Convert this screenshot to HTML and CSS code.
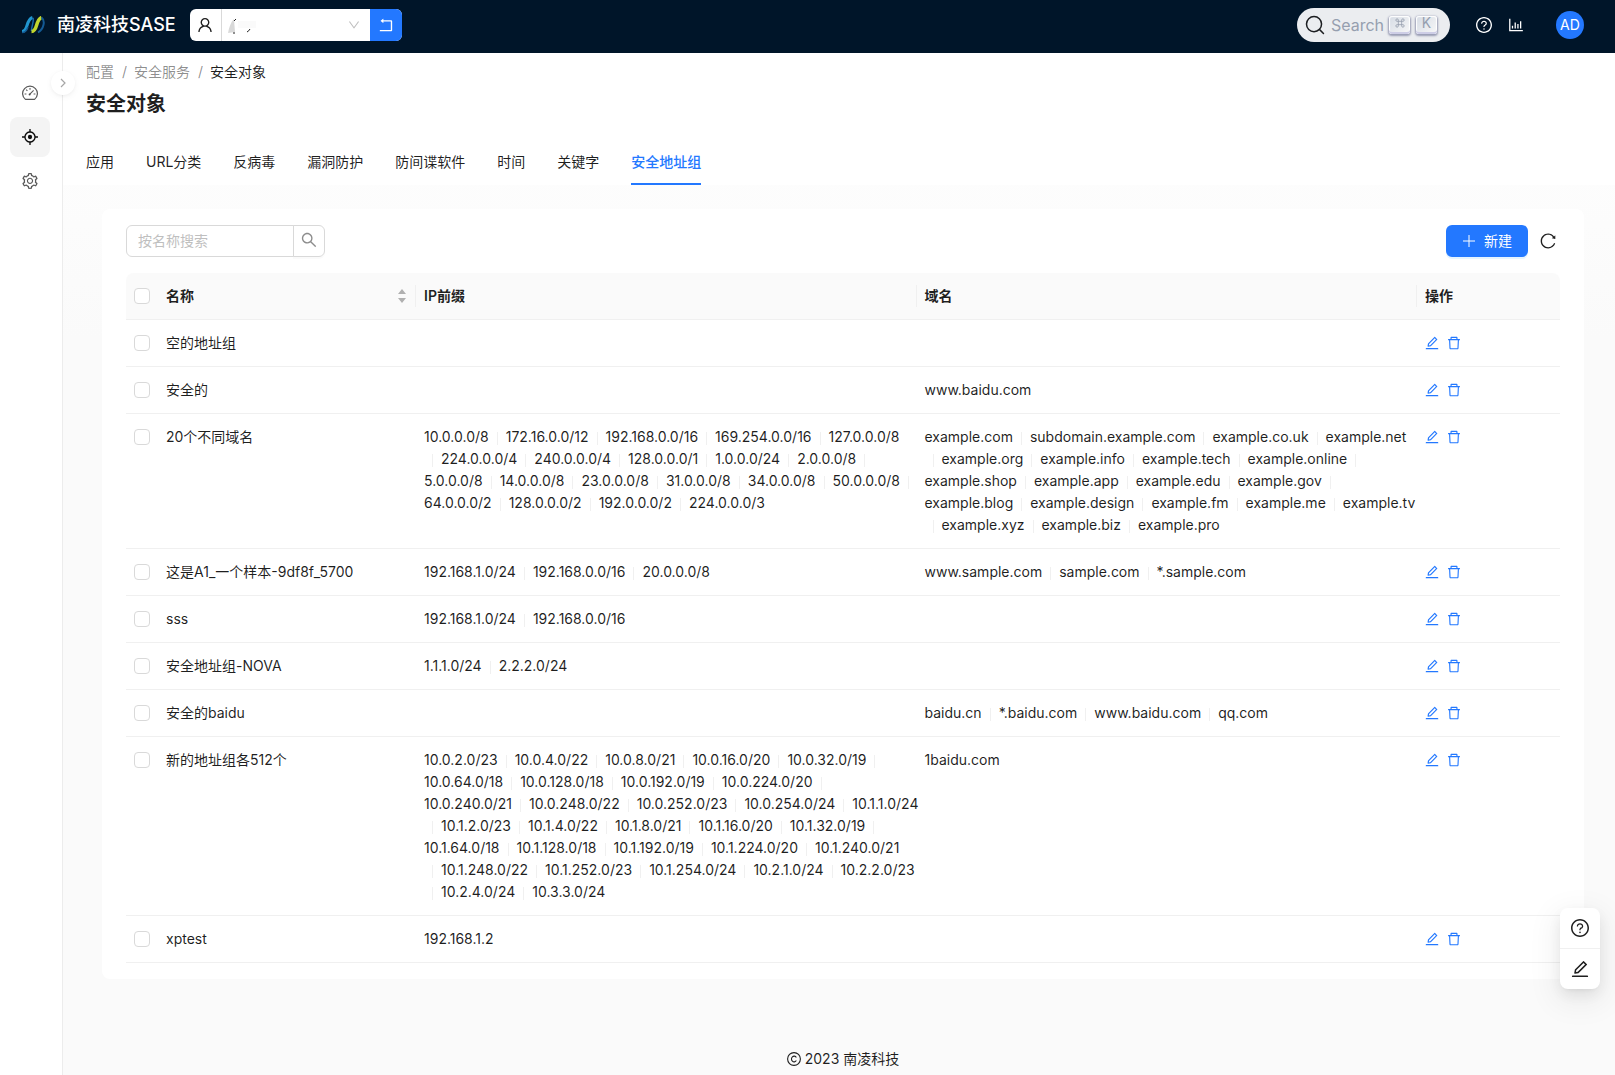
FILE: index.html
```html
<!DOCTYPE html>
<html lang="zh-CN">
<head>
<meta charset="utf-8">
<meta name="viewport" content="width=device-width, initial-scale=1">
<title>安全对象 - 南凌科技SASE</title>
<link rel="stylesheet" href="styles.css">
</head>
<body>
<svg class="sprite" aria-hidden="true">
  <symbol id="i-edit" viewBox="64 64 896 896"><path d="M257.7 752c2 0 4-.2 6-.5L431.9 722c2-.4 3.9-1.3 5.3-2.8l423.9-423.9a9.96 9.96 0 000-14.1L694.9 114.9c-1.9-1.9-4.4-2.9-7.1-2.9s-5.2 1-7.1 2.9L256.8 538.8c-1.5 1.5-2.4 3.3-2.8 5.3l-29.5 168.2a33.5 33.5 0 009.4 29.8c6.6 6.4 14.9 9.9 23.8 9.9zm67.4-174.4L687.8 215l73.3 73.3-362.7 362.6-88.9 15.7 15.6-89zM880 836H144c-17.7 0-32 14.3-32 32v36c0 4.4 3.6 8 8 8h784c4.4 0 8-3.6 8-8v-36c0-17.7-14.3-32-32-32z"/></symbol>
  <symbol id="i-delete" viewBox="64 64 896 896"><path d="M360 184h-8c4.4 0 8-3.6 8-8v8h304v-8c0 4.4 3.6 8 8 8h-8v72h72v-80c0-35.3-28.7-64-64-64H352c-35.3 0-64 28.7-64 64v80h72v-72zm504 72H160c-17.7 0-32 14.3-32 32v32c0 4.4 3.6 8 8 8h60.4l24.7 523c1.6 34.1 29.8 61 63.9 61h454c34.2 0 62.3-26.8 63.9-61l24.7-523H888c4.4 0 8-3.6 8-8v-32c0-17.7-14.3-32-32-32zM731.3 840H292.7l-24.2-512h487l-24.2 512z"/></symbol>
  <symbol id="i-search" viewBox="64 64 896 896"><path d="M909.6 854.5L649.9 594.8C690.2 542.7 712 479 712 412c0-80.2-31.3-155.4-87.9-212.1-56.6-56.7-132-87.9-212.1-87.9s-155.5 31.3-212.1 87.9C143.2 256.5 112 331.8 112 412c0 80.1 31.3 155.5 87.9 212.1C256.5 680.8 331.8 712 412 712c67 0 130.6-21.8 182.7-62l259.7 259.6a8.2 8.2 0 0011.6 0l43.6-43.5a8.2 8.2 0 000-11.6zM570.4 570.4C528 612.7 471.8 636 412 636s-116-23.3-158.4-65.6C211.3 528 188 471.8 188 412s23.3-116.1 65.6-158.4C296 211.3 352.2 188 412 188s116.1 23.2 158.4 65.6S636 352.2 636 412s-23.3 116.1-65.6 158.4z"/></symbol>
  <symbol id="i-reload" viewBox="64 64 896 896"><path d="M909.1 209.3l-56.4 44.1C775.8 155.1 656.2 92 521.9 92 290 92 102.3 279.5 102 511.5 101.7 743.7 289.8 932 521.9 932c181.3 0 335.8-115 394.6-276.1 1.5-4.2-.7-8.9-4.9-10.3l-56.7-19.5a8 8 0 00-10.1 4.8c-1.8 5-3.8 10-5.9 14.9-17.3 41-42.1 77.8-73.7 109.4A344.77 344.77 0 01655.9 829c-42.3 17.9-87.4 27-133.8 27-46.5 0-91.5-9.1-133.8-27A341.5 341.5 0 01279 755.2a342.16 342.16 0 01-73.7-109.4c-17.9-42.4-27-87.4-27-133.9s9.1-91.5 27-133.9c17.3-41 42.1-77.8 73.7-109.4 31.6-31.6 68.4-56.4 109.3-73.8 42.3-17.9 87.4-27 133.8-27 46.5 0 91.5 9.1 133.8 27a341.5 341.5 0 01109.3 73.8c9.9 9.9 19.2 20.4 27.8 31.4l-60.2 47a8 8 0 003 14.1l175.6 43c5 1.2 9.9-2.6 9.9-7.7l.8-180.9c-.1-6.6-7.8-10.3-13-6.2z"/></symbol>
  <symbol id="i-help" viewBox="64 64 896 896"><path d="M512 64C264.6 64 64 264.6 64 512s200.6 448 448 448 448-200.6 448-448S759.4 64 512 64zm0 820c-205.4 0-372-166.6-372-372s166.6-372 372-372 372 166.6 372 372-166.6 372-372 372z"/><path d="M623.6 316.7C593.6 290.4 554 276 512 276s-81.6 14.5-111.6 40.7C369.2 344 352 380.7 352 420v7.6c0 4.4 3.6 8 8 8h48c4.4 0 8-3.6 8-8V420c0-44.1 43.1-80 96-80s96 35.9 96 80c0 31.1-22 59.6-56.1 72.7-21.2 8.1-39.2 22.3-52.1 40.9-13.1 19-19.9 41.8-19.9 64.9V620c0 4.4 3.6 8 8 8h48c4.4 0 8-3.6 8-8v-22.7a48.3 48.3 0 0130.9-44.8c59-22.7 97.1-74.7 97.1-132.5.1-39.3-17.1-76-48.3-103.3zM472 732a40 40 0 1080 0 40 40 0 10-80 0z"/></symbol>
  <symbol id="i-chart" viewBox="64 64 896 896"><path d="M888 792H200V168c0-4.4-3.6-8-8-8h-56c-4.4 0-8 3.6-8 8v688c0 4.4 3.6 8 8 8h752c4.4 0 8-3.6 8-8v-56c0-4.4-3.6-8-8-8zm-600-80h56c4.4 0 8-3.6 8-8V560c0-4.4-3.6-8-8-8h-56c-4.4 0-8 3.6-8 8v144c0 4.4 3.6 8 8 8zm152 0h56c4.4 0 8-3.6 8-8V384c0-4.4-3.6-8-8-8h-56c-4.4 0-8 3.6-8 8v320c0 4.4 3.6 8 8 8zm152 0h56c4.4 0 8-3.6 8-8V462c0-4.4-3.6-8-8-8h-56c-4.4 0-8 3.6-8 8v242c0 4.4 3.6 8 8 8zm152 0h56c4.4 0 8-3.6 8-8V304c0-4.4-3.6-8-8-8h-56c-4.4 0-8 3.6-8 8v400c0 4.4 3.6 8 8 8z"/></symbol>
  <symbol id="i-user" viewBox="64 64 896 896"><path d="M858.5 763.6a374 374 0 00-80.6-119.5 375.63 375.63 0 00-119.5-80.6c-.4-.2-.8-.3-1.2-.5C719.5 518 760 444.7 760 362c0-137-111-248-248-248S264 225 264 362c0 82.7 40.5 156 102.8 201.1-.4.2-.8.3-1.2.5-44.8 18.9-85 46-119.5 80.6a375.63 375.63 0 00-80.6 119.5A371.7 371.7 0 00136 901.8a8 8 0 008 8.2h60c4.4 0 7.9-3.5 8-7.8 2-77.2 33-149.5 87.8-204.3 56.7-56.7 132-87.9 212.2-87.9s155.5 31.2 212.2 87.9C779 752.7 810 825 812 902.2c.1 4.4 3.6 7.8 8 7.8h60a8 8 0 008-8.2c-1-47.8-10.9-94.3-29.5-138.2zM512 534c-45.9 0-89.1-17.9-121.6-50.4S340 407.9 340 362c0-45.9 17.9-89.1 50.4-121.6S466.1 190 512 190s89.1 17.9 121.6 50.4S684 316.1 684 362c0 45.9-17.9 89.1-50.4 121.6S557.9 534 512 534z"/></symbol>
  <symbol id="i-down" viewBox="64 64 896 896"><path d="M884 256h-75c-5.1 0-9.9 2.5-12.9 6.6L512 654.2 227.9 262.6c-3-4.1-7.8-6.6-12.9-6.6h-75c-6.5 0-10.3 7.4-6.5 12.7l352.6 486.1c12.8 17.6 39 17.6 51.7 0l352.6-486.1c3.9-5.3.1-12.7-6.4-12.7z"/></symbol>
  <symbol id="i-rollback" viewBox="64 64 896 896"><path d="M793 242H366v-74c0-6.7-7.7-10.4-12.9-6.3l-142 112a8 8 0 000 12.6l142 112c5.2 4.1 12.9.4 12.9-6.3v-74h415v470H175c-4.4 0-8 3.6-8 8v60c0 4.4 3.6 8 8 8h618c35.3 0 64-28.7 64-64V306c0-35.3-28.7-64-64-64z"/></symbol>
  <symbol id="i-aim" viewBox="64 64 896 896"><path d="M952 474H829.8C812.5 327.6 696.4 211.5 550 194.2V72c0-4.4-3.6-8-8-8h-60c-4.4 0-8 3.6-8 8v122.2C327.6 211.5 211.5 327.6 194.2 474H72c-4.4 0-8 3.6-8 8v60c0 4.4 3.6 8 8 8h122.2C211.5 696.4 327.6 812.5 474 829.8V952c0 4.4 3.6 8 8 8h60c4.4 0 8-3.6 8-8V829.8C696.4 812.5 812.5 696.4 829.8 550H952c4.4 0 8-3.6 8-8v-60c0-4.4-3.6-8-8-8zM512 756c-134.8 0-244-109.2-244-244s109.2-244 244-244 244 109.2 244 244-109.2 244-244 244z"/><circle cx="512" cy="512" r="120"/></symbol>
  <symbol id="i-dashboard" viewBox="0 0 16 16"><path d="M3.4 14.400A7.400 7.400 0 1 1 12.600 14.400Z" fill="none" stroke="currentColor" stroke-width="1.200" stroke-linejoin="round"/><path d="M8 3v1.800M4.200 4.700l1.200 1.200M2.600 9h1.800M11.600 9h1.800M7.600 9.400l4-4" fill="none" stroke="currentColor" stroke-width="1.100"/><circle cx="7.600" cy="9.500" r="1"/></symbol>
  <symbol id="i-setting" viewBox="64 64 896 896"><path d="M924.8 625.7l-65.5-56c3.1-19 4.7-38.4 4.7-57.8s-1.6-38.8-4.7-57.8l65.5-56a32.03 32.03 0 009.3-35.2l-.9-2.6a443.74 443.74 0 00-79.7-137.9l-1.8-2.1a32.12 32.12 0 00-35.1-9.5l-81.3 28.9c-30-24.6-63.5-44-99.7-57.6l-15.7-85a32.05 32.05 0 00-25.8-25.7l-2.7-.5c-52.1-9.4-106.9-9.4-159 0l-2.7.5a32.05 32.05 0 00-25.8 25.7l-15.8 85.4a351.86 351.86 0 00-99 57.4l-81.9-29.1a32 32 0 00-35.1 9.5l-1.8 2.1a446.02 446.02 0 00-79.7 137.9l-.9 2.6c-4.5 12.5-.8 26.5 9.3 35.2l66.3 56.6c-3.1 18.8-4.6 38-4.6 57.1 0 19.2 1.5 38.4 4.6 57.1L99 625.5a32.03 32.03 0 00-9.3 35.2l.9 2.6c18.1 50.4 44.9 96.9 79.7 137.9l1.8 2.1a32.12 32.12 0 0035.1 9.5l81.9-29.1c29.8 24.5 63.1 43.9 99 57.4l15.8 85.4a32.05 32.05 0 0025.8 25.7l2.7.5a449.4 449.4 0 00159 0l2.7-.5a32.05 32.05 0 0025.8-25.7l15.7-85a350 350 0 0099.7-57.6l81.3 28.9a32 32 0 0035.1-9.5l1.8-2.1c34.8-41.1 61.6-87.5 79.7-137.9l.9-2.6c4.5-12.3.8-26.3-9.3-35zM788.3 465.9c2.5 15.1 3.8 30.6 3.8 46.1s-1.3 31-3.8 46.1l-6.6 40.1 74.7 63.9a370.03 370.03 0 01-42.6 73.6L721 702.8l-31.4 25.8c-23.9 19.6-50.5 35-79.3 45.8l-38.1 14.3-17.9 97a377.5 377.5 0 01-85 0l-17.9-97.2-37.8-14.5c-28.5-10.8-55-26.2-78.7-45.7l-31.4-25.9-93.4 33.2c-17-22.9-31.2-47.6-42.6-73.6l75.5-64.5-6.5-40c-2.4-14.9-3.7-30.3-3.7-45.5 0-15.3 1.2-30.6 3.7-45.5l6.5-40-75.5-64.5c11.3-26.1 25.6-50.7 42.6-73.6l93.4 33.2 31.4-25.9c23.7-19.5 50.2-34.9 78.7-45.7l37.9-14.3 17.9-97.2c28.1-3.2 56.8-3.2 85 0l17.9 97 38.1 14.3c28.7 10.8 55.4 26.2 79.3 45.8l31.4 25.8 92.8-32.9c17 22.9 31.2 47.6 42.6 73.6L781.8 426l6.5 39.9zM512 326c-97.2 0-176 78.8-176 176s78.8 176 176 176 176-78.8 176-176-78.8-176-176-176zm79.2 255.2A111.6 111.6 0 01512 614c-29.9 0-58-11.7-79.2-32.8A111.6 111.6 0 01400 502c0-29.9 11.7-58 32.8-79.2C454 401.6 482.1 390 512 390c29.9 0 58 11.6 79.2 32.8A111.6 111.6 0 01624 502c0 29.9-11.7 58-32.8 79.2z"/></symbol>
</svg>

<header class="topbar">
  <a class="brand" href="#">
    <svg class="logo" viewBox="0 0 24 18" aria-hidden="true">
      <path d="M1 15.500C3.500 15.500 5 13 6 9.500S8.500 2.500 11.500 1.500" fill="none" stroke="#2196cf" stroke-width="3"/>
      <path d="M1 16.500C4 16.500 6 14 7 11" fill="none" stroke="#135a94" stroke-width="1.500"/>
      <path d="M12 2C13.500 4 10 12 10.500 15" fill="none" stroke="#1769a8" stroke-width="1.500"/>
      <path d="M10.500 15.500C13 15.500 14.500 13 15.500 9.500S18 2.500 20.500 1.500" fill="none" stroke="#c2d62e" stroke-width="3.500"/>
      <path d="M20.500 1.500C24.500 4.500 23 13 17 16.500" fill="none" stroke="#135a94" stroke-width="2"/>
    </svg>
    <span>南凌科技SASE</span>
  </a>
  <div class="tenant">
    <button class="tenant-user" type="button" aria-label="用户"><svg class="icon icon-16"><use href="#i-user"/></svg></button>
    <div class="tenant-pick">
      <select aria-label="租户"><option></option></select>
      <svg class="tenant-mask" viewBox="0 0 40 18" aria-hidden="true"><path d="M0 16C1 10 3 5 6 2L7 15Z" fill="#d9d9d9"/><path d="M6 4l2-2M5 16h2M19 15q2-1 3-3" stroke="#222" fill="none"/><path d="M10 4h18v7H10z" fill="#fafafa"/></svg>
      <svg class="icon icon-12 tenant-arrow"><use href="#i-down"/></svg>
    </div>
    <button class="tenant-back" type="button" aria-label="返回"><svg class="icon icon-16"><use href="#i-rollback"/></svg></button>
  </div>
  <div class="top-actions">
    <button class="doc-search" type="button">
      <svg class="icon-20" viewBox="0 0 20 20" aria-hidden="true"><path d="M14.386 14.386l4.088 4.088-4.088-4.088A7.533 7.533 0 1 1 3.733 3.733a7.533 7.533 0 0 1 10.653 10.653z" fill="none" stroke="#1c1e21" stroke-width="1.500" stroke-linecap="round" stroke-linejoin="round"/></svg>
      <span class="doc-label">Search</span>
      <kbd><svg viewBox="0 0 12 12" aria-hidden="true"><path d="M4 4V2.500A1.500 1.500 0 1 0 2.500 4h7A1.500 1.500 0 1 0 8 2.500v7A1.500 1.500 0 1 0 9.500 8h-7A1.500 1.500 0 1 0 4 9.500Z" fill="none" stroke="currentColor"/></svg></kbd>
      <kbd>K</kbd>
    </button>
    <button class="top-icon" type="button" aria-label="帮助"><svg class="icon icon-16"><use href="#i-help"/></svg></button>
    <button class="top-icon" type="button" aria-label="统计"><svg class="icon icon-16"><use href="#i-chart"/></svg></button>
    <button class="avatar" type="button">AD</button>
  </div>
</header>

<div class="layout">
  <nav class="sider" aria-label="主菜单">
    <a href="#" aria-label="仪表盘"><svg class="icon icon-16"><use href="#i-dashboard"/></svg></a>
    <a class="active" href="#" aria-label="配置"><svg class="icon icon-16"><use href="#i-aim"/></svg></a>
    <a href="#" aria-label="设置"><svg class="icon icon-16"><use href="#i-setting"/></svg></a>
    <button class="collapse" type="button" aria-label="展开菜单"><svg viewBox="0 0 12 12" aria-hidden="true"><path d="M4 2l4 4-4 4" fill="none" stroke="currentColor" stroke-width="1.200"/></svg></button>
  </nav>

  <div class="page">
    <div class="page-head">
      <nav class="crumbs" aria-label="面包屑"><a href="#">配置</a><span>/</span><a href="#">安全服务</a><span>/</span><b>安全对象</b></nav>
      <h1>安全对象</h1>
      <nav class="tabs" aria-label="对象类型">
        <a href="#">应用</a><a href="#">URL分类</a><a href="#">反病毒</a><a href="#">漏洞防护</a><a href="#">防间谍软件</a><a href="#">时间</a><a href="#">关键字</a><a class="current" href="#">安全地址组</a>
      </nav>
    </div>

    <main class="card">
      <div class="toolbar">
        <form class="search">
          <input type="text" placeholder="按名称搜索" aria-label="按名称搜索">
          <button type="button" aria-label="搜索"><svg class="icon icon-16"><use href="#i-search"/></svg></button>
        </form>
        <div class="tools">
          <button class="primary" type="button"><svg class="icon-14" viewBox="0 0 14 14" aria-hidden="true"><path d="M7 1v12M1 7h12" fill="none" stroke="currentColor" stroke-width="1"/></svg><span>新建</span></button>
          <button class="reload" type="button" aria-label="刷新"><svg class="icon icon-16"><use href="#i-reload"/></svg></button>
        </div>
      </div>

      <table>
        <colgroup><col class="c-check"><col class="c-name"><col><col><col class="c-ops"></colgroup>
        <thead>
          <tr>
            <th><input type="checkbox" aria-label="全选"></th>
            <th class="split"><div class="sortable"><span>名称</span><svg class="sorter" viewBox="0 0 8 14" aria-hidden="true"><path d="M4 0l4 5H0zM4 14l4-5H0z"/></svg></div></th>
            <th class="split">IP前缀</th>
            <th class="split">域名</th>
            <th>操作</th>
          </tr>
        </thead>
        <tbody>
          <tr>
            <td><input type="checkbox" aria-label="选择 空的地址组"></td><td>空的地址组</td><td></td><td></td>
            <td><div class="ops"><button type="button" aria-label="编辑"><svg class="icon icon-14"><use href="#i-edit"/></svg></button><button type="button" aria-label="删除"><svg class="icon icon-14"><use href="#i-delete"/></svg></button></div></td>
          </tr>
          <tr>
            <td><input type="checkbox" aria-label="选择 安全的"></td><td>安全的</td><td></td><td>www.baidu.com</td>
            <td><div class="ops"><button type="button" aria-label="编辑"><svg class="icon icon-14"><use href="#i-edit"/></svg></button><button type="button" aria-label="删除"><svg class="icon icon-14"><use href="#i-delete"/></svg></button></div></td>
          </tr>
          <tr>
            <td><input type="checkbox" aria-label="选择 20个不同域名"></td><td>20个不同域名</td>
            <td class="lines">10.0.0.0/8<i></i>172.16.0.0/12<i></i>192.168.0.0/16<i></i>169.254.0.0/16<i></i>127.0.0.0/8<br><i></i>224.0.0.0/4<i></i>240.0.0.0/4<i></i>128.0.0.0/1<i></i>1.0.0.0/24<i></i>2.0.0.0/8<i></i><br>5.0.0.0/8<i></i>14.0.0.0/8<i></i>23.0.0.0/8<i></i>31.0.0.0/8<i></i>34.0.0.0/8<i></i>50.0.0.0/8<i></i><br>64.0.0.0/2<i></i>128.0.0.0/2<i></i>192.0.0.0/2<i></i>224.0.0.0/3</td>
            <td class="lines">example.com<i></i>subdomain.example.com<i></i>example.co.uk<i></i>example.net<br><i></i>example.org<i></i>example.info<i></i>example.tech<i></i>example.online<i></i><br>example.shop<i></i>example.app<i></i>example.edu<i></i>example.gov<i></i><br>example.blog<i></i>example.design<i></i>example.fm<i></i>example.me<i></i>example.tv<br><i></i>example.xyz<i></i>example.biz<i></i>example.pro</td>
            <td><div class="ops"><button type="button" aria-label="编辑"><svg class="icon icon-14"><use href="#i-edit"/></svg></button><button type="button" aria-label="删除"><svg class="icon icon-14"><use href="#i-delete"/></svg></button></div></td>
          </tr>
          <tr>
            <td><input type="checkbox" aria-label="选择 这是A1_一个样本-9df8f_5700"></td><td>这是A1_一个样本-9df8f_5700</td>
            <td>192.168.1.0/24<i></i>192.168.0.0/16<i></i>20.0.0.0/8</td>
            <td>www.sample.com<i></i>sample.com<i></i>*.sample.com</td>
            <td><div class="ops"><button type="button" aria-label="编辑"><svg class="icon icon-14"><use href="#i-edit"/></svg></button><button type="button" aria-label="删除"><svg class="icon icon-14"><use href="#i-delete"/></svg></button></div></td>
          </tr>
          <tr>
            <td><input type="checkbox" aria-label="选择 sss"></td><td>sss</td><td>192.168.1.0/24<i></i>192.168.0.0/16</td><td></td>
            <td><div class="ops"><button type="button" aria-label="编辑"><svg class="icon icon-14"><use href="#i-edit"/></svg></button><button type="button" aria-label="删除"><svg class="icon icon-14"><use href="#i-delete"/></svg></button></div></td>
          </tr>
          <tr>
            <td><input type="checkbox" aria-label="选择 安全地址组-NOVA"></td><td>安全地址组-NOVA</td><td>1.1.1.0/24<i></i>2.2.2.0/24</td><td></td>
            <td><div class="ops"><button type="button" aria-label="编辑"><svg class="icon icon-14"><use href="#i-edit"/></svg></button><button type="button" aria-label="删除"><svg class="icon icon-14"><use href="#i-delete"/></svg></button></div></td>
          </tr>
          <tr>
            <td><input type="checkbox" aria-label="选择 安全的baidu"></td><td>安全的baidu</td><td></td><td>baidu.cn<i></i>*.baidu.com<i></i>www.baidu.com<i></i>qq.com</td>
            <td><div class="ops"><button type="button" aria-label="编辑"><svg class="icon icon-14"><use href="#i-edit"/></svg></button><button type="button" aria-label="删除"><svg class="icon icon-14"><use href="#i-delete"/></svg></button></div></td>
          </tr>
          <tr>
            <td><input type="checkbox" aria-label="选择 新的地址组各512个"></td><td>新的地址组各512个</td>
            <td class="lines">10.0.2.0/23<i></i>10.0.4.0/22<i></i>10.0.8.0/21<i></i>10.0.16.0/20<i></i>10.0.32.0/19<i></i><br>10.0.64.0/18<i></i>10.0.128.0/18<i></i>10.0.192.0/19<i></i>10.0.224.0/20<i></i><br>10.0.240.0/21<i></i>10.0.248.0/22<i></i>10.0.252.0/23<i></i>10.0.254.0/24<i></i>10.1.1.0/24<br><i></i>10.1.2.0/23<i></i>10.1.4.0/22<i></i>10.1.8.0/21<i></i>10.1.16.0/20<i></i>10.1.32.0/19<i></i><br>10.1.64.0/18<i></i>10.1.128.0/18<i></i>10.1.192.0/19<i></i>10.1.224.0/20<i></i>10.1.240.0/21<br><i></i>10.1.248.0/22<i></i>10.1.252.0/23<i></i>10.1.254.0/24<i></i>10.2.1.0/24<i></i>10.2.2.0/23<br><i></i>10.2.4.0/24<i></i>10.3.3.0/24</td>
            <td>1baidu.com</td>
            <td><div class="ops"><button type="button" aria-label="编辑"><svg class="icon icon-14"><use href="#i-edit"/></svg></button><button type="button" aria-label="删除"><svg class="icon icon-14"><use href="#i-delete"/></svg></button></div></td>
          </tr>
          <tr>
            <td><input type="checkbox" aria-label="选择 xptest"></td><td>xptest</td><td>192.168.1.2</td><td></td>
            <td><div class="ops"><button type="button" aria-label="编辑"><svg class="icon icon-14"><use href="#i-edit"/></svg></button><button type="button" aria-label="删除"><svg class="icon icon-14"><use href="#i-delete"/></svg></button></div></td>
          </tr>
        </tbody>
      </table>
    </main>

    <footer>
      <svg class="icon-14" viewBox="0 0 14 14" aria-hidden="true"><g fill="none" stroke="currentColor" stroke-width="1.100"><circle cx="7" cy="7" r="6.400"/><path d="M9.300 5.500A2.600 2.900 0 1 0 9.300 8.500"/></g></svg>
      <span>2023 南凌科技</span>
    </footer>
  </div>
</div>

<div class="float-group">
  <button type="button" aria-label="帮助"><svg class="icon icon-18"><use href="#i-help"/></svg></button>
  <button type="button" aria-label="反馈"><svg class="icon icon-18"><use href="#i-edit"/></svg></button>
</div>
</body>
</html>
```
FILE: styles.css
```css
*,
*::before,
*::after {
  box-sizing: border-box;
}

body {
  margin: 0;
  background: #fafafa;
  color: rgba(0, 0, 0, 0.88);
  font: 14px/22px Inter, "Noto Sans CJK SC", sans-serif;
}

a {
  color: inherit;
  text-decoration: none;
}

button,
input,
select {
  margin: 0;
  padding: 0;
  border: 0;
  background: none;
  color: inherit;
  font: inherit;
}

button {
  display: flex;
  align-items: center;
  justify-content: center;
  cursor: pointer;
}

svg { display: block; flex: none; }
.sprite { position: absolute; width: 0; height: 0; }
.icon, .sorter { fill: currentColor; }
.icon-12 { width: 12px; height: 12px; }
.icon-14 { width: 14px; height: 14px; }
.icon-16 { width: 16px; height: 16px; }
.icon-18 { width: 18px; height: 18px; }
.icon-20 { width: 20px; height: 20px; }

/* top bar */
.topbar {
  display: flex;
  align-items: center;
  height: 53px;
  padding: 0 31px 4px 21px;
  background: #001529;
  color: #fff;
}

.brand {
  display: flex;
  align-items: center;
  gap: 12px;
  margin-right: 14px;
  font-size: 18px;
  font-weight: 500;
}

.logo { width: 24px; height: 18px; }

.tenant {
  display: flex;
  height: 32px;
  border-radius: 6px;
  background: #fff;
  overflow: hidden;
}

.tenant-user {
  width: 32px;
  border-right: 1px solid #d9d9d9;
  color: #1f1f1f;
}

.tenant-pick {
  position: relative;
  width: 148px;
}

.tenant-pick select {
  width: 100%;
  height: 100%;
  appearance: none;
}

.tenant-mask {
  position: absolute;
  top: 8px;
  left: 6px;
  width: 40px;
  height: 18px;
}

.tenant-arrow {
  position: absolute;
  top: 10px;
  right: 10px;
  color: #bfbfbf;
}

.tenant-back {
  width: 32px;
  background: #2378ff;
  color: #fff;
}

.top-actions {
  display: flex;
  align-items: center;
  margin-left: auto;
}

.doc-search {
  height: 34px;
  margin-right: 18px;
  padding: 0 13px 0 8px;
  border-radius: 17px;
  background: #ebedf0;
  color: #969faf;
}

.doc-label {
  padding: 0 5px 0 6px;
  font-size: 16px;
}

kbd {
  display: flex;
  align-items: center;
  justify-content: center;
  width: 21px;
  height: 18px;
  padding-bottom: 4px;
  border-radius: 3px;
  background: linear-gradient(-225deg, #d5dbe4, #f8f8f8);
  box-shadow: inset 0 -2px 0 0 #cdcde6, inset 0 0 1px 1px #fff, 0 1px 2px 1px rgba(30, 35, 90, 0.4);
  font: 14px/16px Inter, sans-serif;
}

kbd + kbd { margin-left: 6px; }
kbd svg { width: 10px; height: 10px; }

.top-icon {
  width: 32px;
  height: 32px;
}

.avatar {
  width: 28px;
  height: 28px;
  margin-left: 24px;
  border-radius: 50%;
  background: #2378ff;
}

/* frame */
.layout {
  display: flex;
  min-height: calc(100vh - 53px);
}

.sider {
  position: relative;
  display: flex;
  flex: none;
  flex-direction: column;
  align-items: center;
  gap: 4px;
  width: 63px;
  padding: 20px 2px 0 0;
  border-right: 1px solid #ececec;
  background: #fff;
}

.sider a {
  display: flex;
  align-items: center;
  justify-content: center;
  width: 40px;
  height: 40px;
  border-radius: 8px;
  color: rgba(0, 0, 0, 0.65);
}

.sider a.active {
  background: #f4f4f4;
  color: rgba(0, 0, 0, 0.95);
}

.collapse {
  position: absolute;
  top: 18px;
  right: -13px;
  width: 24px;
  height: 24px;
  border-radius: 50%;
  background: #fff;
  box-shadow: 0 2px 8px -2px rgba(0, 0, 0, 0.08), 0 1px 4px -1px rgba(25, 15, 15, 0.06);
  color: #a6a6a6;
}

.collapse svg { width: 12px; height: 12px; }

.page {
  display: flex;
  flex: 1;
  flex-direction: column;
  min-width: 0;
  background: linear-gradient(#fff, #fafafa 28%);
}

.page-head {
  padding: 8px 23px 0;
  background: #fff;
}

.crumbs {
  display: flex;
  color: rgba(0, 0, 0, 0.45);
}

.crumbs span { margin: 0 7px 0 8px; }

.crumbs b {
  color: rgba(0, 0, 0, 0.88);
  font-weight: 400;
}

h1 {
  margin: 5px 0 15px;
  font-size: 20px;
  font-weight: 600;
  line-height: 32px;
}

.tabs {
  display: flex;
  gap: 32px;
}

.tabs a {
  padding: 16px 0 10px;
  border-bottom: 2px solid transparent;
}

.tabs .current {
  border-color: #2378ff;
  color: #2378ff;
  font-weight: 500;
}

/* content card */
.card {
  margin: 24px 31px 0 39px;
  padding: 16px 24px;
  border-radius: 8px;
  background: #fff;
}

.toolbar {
  display: flex;
  justify-content: space-between;
  margin-bottom: 16px;
}

.search { display: flex; }

.search input {
  width: 168px;
  height: 32px;
  padding: 0 11px 2px;
  border: 1px solid #d9d9d9;
  border-radius: 6px 0 0 6px;
}

.search input::placeholder { color: #bfbfbf; }

.search button {
  width: 32px;
  margin-left: -1px;
  padding-bottom: 2px;
  border: 1px solid #d9d9d9;
  border-radius: 0 6px 6px 0;
  box-shadow: 0 2px 0 rgba(0, 0, 0, 0.02);
  color: rgba(0, 0, 0, 0.45);
}

.tools {
  display: flex;
  align-items: center;
  gap: 12px;
  padding-right: 4px;
}

.primary {
  gap: 8px;
  height: 32px;
  padding: 0 16px;
  border-radius: 6px;
  background: #2378ff;
  box-shadow: 0 2px 0 rgba(5, 145, 255, 0.1);
  color: #fff;
}

table {
  width: 100%;
  border-spacing: 0;
  table-layout: fixed;
}

.c-check { width: 32px; }
.c-name { width: 258px; }
.c-ops { width: 143px; }

th,
td {
  padding: 12px 8px;
  border-bottom: 1px solid #f0f0f0;
  text-align: left;
  vertical-align: top;
}

th {
  position: relative;
  background: #fafafa;
  font-weight: 600;
}

th:first-child { border-top-left-radius: 8px; }
th:last-child { border-top-right-radius: 8px; }

.split::after {
  position: absolute;
  top: 12px;
  right: 0;
  width: 1px;
  height: 22px;
  background: #f0f0f0;
  content: "";
}

.sortable {
  display: flex;
  align-items: center;
  justify-content: space-between;
}

.sorter {
  width: 8px;
  height: 14px;
  margin-right: 2px;
  color: #b0b0b0;
}

.lines { white-space: nowrap; }

td i {
  display: inline-block;
  width: 1px;
  height: 13px;
  margin: 0 8px;
  background: #f0f0f0;
  vertical-align: middle;
}

input[type="checkbox"] {
  display: block;
  width: 16px;
  height: 16px;
  margin: 3px 0;
  border: 1px solid #d9d9d9;
  border-radius: 4px;
  background: #fff;
  appearance: none;
}

.ops {
  display: flex;
  align-items: center;
  gap: 8px;
  height: 22px;
  color: #2378ff;
}

footer {
  display: flex;
  align-items: center;
  justify-content: center;
  gap: 4px;
  margin: auto 31px 0 39px;
  padding: 48px 0 5px;
}

/* floating help buttons */
.float-group {
  position: fixed;
  right: 15px;
  bottom: 86px;
  width: 40px;
  border-radius: 8px;
  background: #fff;
  box-shadow: 0 6px 16px rgba(0, 0, 0, 0.08), 0 3px 6px -4px rgba(0, 0, 0, 0.12), 0 9px 28px 8px rgba(0, 0, 0, 0.05);
}

.float-group button {
  width: 40px;
  height: 40px;
}

.float-group button + button {
  height: 41px;
  border-top: 1px solid #f0f0f0;
}
```
